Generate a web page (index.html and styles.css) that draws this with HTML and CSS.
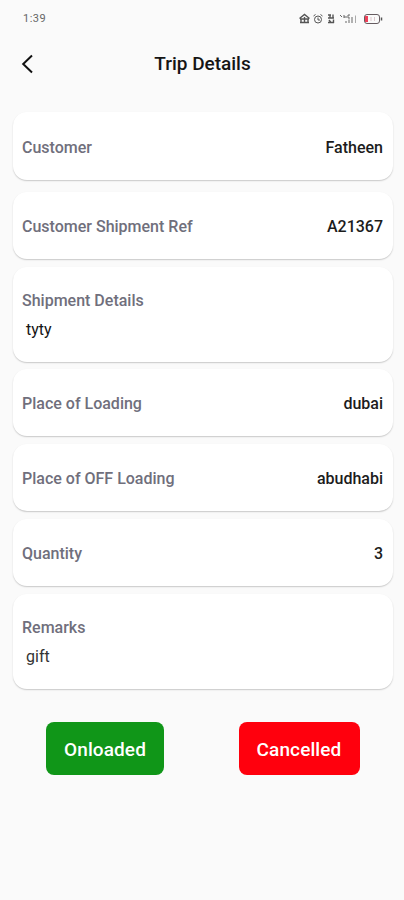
FILE: index.html
```
<!DOCTYPE html>
<html lang="en">
<head>
<meta charset="utf-8">
<title>Trip Details</title>
<link rel="stylesheet" href="styles.css">
</head>
<body>
<div class="status">
  <span class="time">1:39</span>
  <svg class="status-icons" width="86" height="14" viewBox="0 0 86 14" fill="none" stroke="#555" stroke-width="1">
    <path d="M1.500 6.500L6.500 2.500L11.500 6.500M2 7h9M2 10.500h9M3 7v4M6.500 5v6M10 7v4" stroke-width="1.400"/>
    <circle cx="20" cy="7.500" r="3.500"/><path d="M20 5.500v2.500h2M15.500 4l2-1.500M24.500 4l-2-1.500"/>
    <path d="M30 3h3M32 3v3M30 6h6M35 2.500v4M30 10.500h6M31 8l2 2.500M35.500 7.500v3.500" stroke-width="1.400"/>
    <path d="M42 3l2 2M46 3v3M46 5h3M52 3h-2v3h2M48 11V9M51 11V7.500M54 11V5" stroke="#666"/><path d="M57.500 11V3.500" stroke="#aaa"/>
    <rect x="66.500" y="2.500" width="15" height="9" rx="2.500" stroke="#665c60"/><path d="M83.500 5.500v3" stroke-width="1.500"/>
    <path d="M68.500 4v6" stroke="#ed4058" stroke-width="3"/><path d="M73 5v4M76.500 5v4" stroke="#ddc8cc"/>
  </svg>
</div>
<header class="header">
  <svg class="back" width="14" height="20" viewBox="0 0 14 20" fill="none" stroke="#111" stroke-width="2"><path d="M12 1.500L3.200 10l8.800 8.500"/></svg>
  <h1 class="title">Trip Details</h1>
</header>
<main class="cards">
  <section class="card first"><span class="label">Customer</span><span class="value">Fatheen</span></section>
  <section class="card"><span class="label">Customer Shipment Ref</span><span class="value">A21367</span></section>
  <section class="card tall"><span class="label">Shipment Details</span><span class="note">tyty</span></section>
  <section class="card"><span class="label">Place of Loading</span><span class="value">dubai</span></section>
  <section class="card"><span class="label">Place of OFF Loading</span><span class="value">abudhabi</span></section>
  <section class="card"><span class="label">Quantity</span><span class="value">3</span></section>
  <section class="card tall"><span class="label">Remarks</span><span class="note light">gift</span></section>
</main>
<div class="actions">
  <button class="btn onloaded">Onloaded</button>
  <button class="btn cancelled">Cancelled</button>
</div>
</body>
</html>
```
FILE: styles.css
```
* { box-sizing: border-box; }
body {
  margin: 0;
  height: 900px;
  background: #fafafa;
  font-family: Roboto, sans-serif;
  color: #151515;
}
.status {
  height: 37px;
  padding: 0 20px 0 23px;
  display: flex;
  align-items: center;
  justify-content: space-between;
}
.time { font-size: 11px; letter-spacing: 0.500px; color: #666; }
.status-icons { display: block; }
.header {
  height: 53px;
  padding: 0 20px;
  display: grid;
  grid-template-columns: 14px 1fr 14px;
  align-items: center;
}
.back { display: block; }
.title {
  margin: 0;
  padding-left: 1px;
  text-align: center;
  font-size: 19px;
  line-height: 22px;
  font-weight: 500;
}
.cards {
  padding: 22px 11px 0 13px;
  display: flex;
  flex-direction: column;
  gap: 7.800px;
}
.card {
  height: 67px;
  padding: 3px 10px 0 9px;
  border-radius: 14px;
  background: #fff;
  box-shadow: 0 1px 1.500px rgba(0, 0, 0, 0.2);
  display: flex;
  align-items: center;
  justify-content: space-between;
}
.first { height: 68px; margin-bottom: 4px; }
.tall {
  height: 95px;
  padding-top: 24px;
  flex-direction: column;
  align-items: flex-start;
  justify-content: flex-start;
  gap: 9px;
}
.label, .value, .note {
  font-size: 16px;
  line-height: 20px;
  font-weight: 500;
}
.label { color: #706f7c; }
.value { color: #1c1c1c; }
.note { padding-left: 4px; font-weight: 400; }
.light { color: #333; }
.actions {
  padding: 33px 44.500px 0 46px;
  display: flex;
  justify-content: space-between;
}
.btn {
  width: 118px;
  height: 53px;
  padding: 3px 0 0;
  border: 0;
  border-radius: 8px;
  color: #fff;
  font: 500 19px/22px Roboto, sans-serif;
  letter-spacing: 0.100px;
}
.onloaded { background: #109618; }
.cancelled { width: 121px; background: #ff000d; }
```
